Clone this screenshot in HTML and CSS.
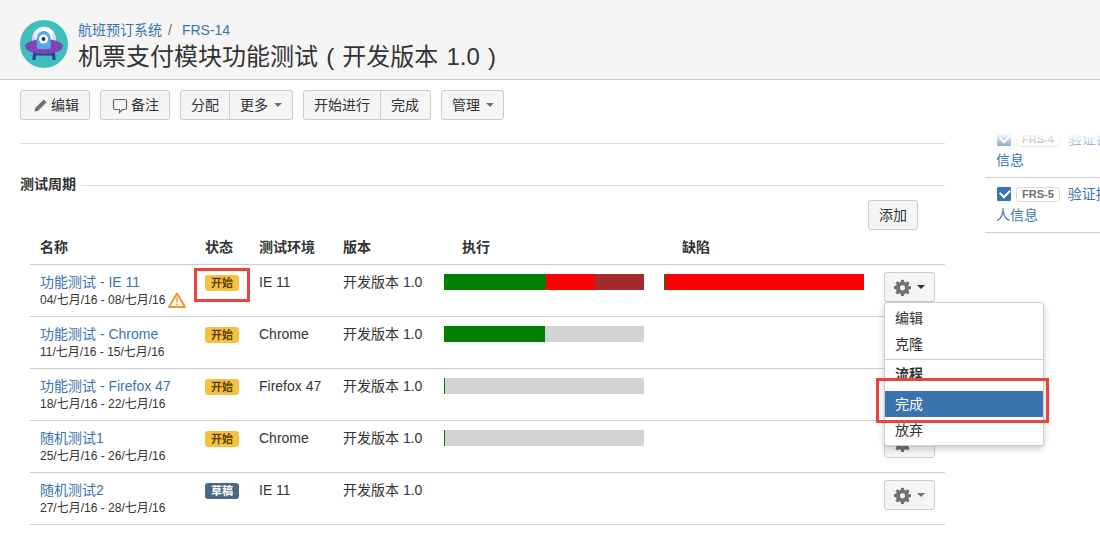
FILE: index.html
```html
<!DOCTYPE html>
<html lang="zh">
<head>
<meta charset="utf-8">
<title>机票支付模块功能测试</title>
<link rel="stylesheet" href="styles.css">
</head>
<body>
<svg class="defs" width="0" height="0" aria-hidden="true">
  <symbol id="gear" viewBox="0 0 24 24">
    <path fill-rule="evenodd" d="M10 1h4l.6 3.2 1.900.8L19.200 3.200l2.800 2.800-1.800 2.700.8 1.900L24 10v4l-3 .6-.8 1.900 1.800 2.700-2.800 2.800-2.700-1.800-1.900.8L14 24h-4l-.6-3-1.900-.8-2.700 1.800L2 19.200l1.800-2.700-.8-1.900L0 14v-4l3-.6.8-1.900L2 6l2.800-2.800 2.700 1.800 1.900-.8zM12 8.800a3.600 3.600 0 1 0 0 7.200 3.600 3.600 0 0 0 0-7.200z"/>
  </symbol>
</svg>

<header class="page-head">
  <svg class="logo" viewBox="0 0 48 48" aria-hidden="true">
    <circle cx="24" cy="24" r="24" fill="#3fbfbb"/>
    <path d="M12.300 30V18.500a11.700 11.700 0 0 1 23.400 0V30z" fill="#fff"/>
    <path d="M12.300 30V18.500a11.700 11.700 0 0 1 3-7.800V30z" fill="#dcd3f2"/>
    <path d="M35.700 30V18.500a11.700 11.700 0 0 0-3-7.800V30z" fill="#dcd3f2"/>
    <path d="M13 33.500h3l-.5 6.500h-3zM32 33.500h3l.5 6.500h-3z" fill="#2f3a94"/>
    <path d="M13 32h22v3.500H13z" fill="#2f3a94"/>
    <ellipse cx="24" cy="26.500" rx="19" ry="7.500" fill="#7d45b5"/>
    <path d="M16.700 18a7 7 0 0 1 14 0v10.500a14 5 0 0 1-14 0z" fill="#55a9e6"/>
    <circle cx="23.500" cy="19" r="4.500" fill="#fff"/>
    <circle cx="23.500" cy="19" r="2" fill="#243a6b"/>
  </svg>
  <div class="head-text">
    <div class="crumbs"><a class="link">航班预订系统</a><span class="sep">/</span><a class="link">FRS-14</a></div>
    <h1 class="title">机票支付模块功能测试 ( 开发版本 1.0 )</h1>
  </div>
</header>

<nav class="toolbar">
  <button class="btn"><svg class="ico" viewBox="0 0 16 16" aria-hidden="true"><path d="M11.500 1.500l3 3L5.500 13.500l-4 1 1-4z" fill="#707070"/></svg>编辑</button>
  <button class="btn"><svg class="ico-bubble" viewBox="0 0 16 16" aria-hidden="true"><path d="M3 1.500h10a1.500 1.500 0 0 1 1.500 1.500v7a1.500 1.500 0 0 1-1.500 1.500h-2.500L7.500 14.500v-3H3A1.500 1.500 0 0 1 1.500 10V3A1.500 1.500 0 0 1 3 1.500z" fill="none" stroke="#666" stroke-width="1.200"/></svg>备注</button>
  <div class="group"><button class="btn">分配</button><button class="btn">更多<span class="caret"></span></button></div>
  <div class="group"><button class="btn">开始进行</button><button class="btn btn-wide">完成</button></div>
  <button class="btn btn-tight">管理<span class="caret"></span></button>
</nav>

<div class="content">
  <main class="main">
    <hr class="top-rule">
    <div class="section-head"><h2 class="section-title">测试周期</h2><span class="section-line"></span></div>
    <div class="add-row"><button class="btn btn-add">添加</button></div>
    <table class="cycles">
      <thead>
        <tr>
          <th class="c-name">名称</th><th class="c-status">状态</th><th class="c-env">测试环境</th><th class="c-ver">版本</th>
          <th class="c-bar th-bar">执行</th><th class="c-bar th-bar">缺陷</th><th class="c-act"></th>
        </tr>
      </thead>
      <tbody>
        <tr>
          <td><a class="link">功能测试 - IE 11</a><div class="dates">04/七月/16 - 08/七月/16<svg class="warn" viewBox="0 0 18 16" aria-hidden="true"><path d="M9 1.500L17 15H1z" fill="#fff" stroke="#f79232" stroke-width="2" stroke-linejoin="round"/><path d="M8.200 5.500h1.600l-.2 5.200H8.400zM8.200 11.700h1.600v1.600H8.200z" fill="#f79232"/></svg></div></td>
          <td><span class="loz loz-go">开始</span></td><td>IE 11</td><td>开发版本 1.0</td>
          <td class="bar-cell"><div class="bar"><i class="seg green" style="width:51%"></i><i class="seg red" style="width:24.500%"></i><i class="seg brown" style="width:24.500%"></i></div></td>
          <td class="bar-cell"><div class="bar"><i class="seg green" style="width:1px"></i><i class="seg red" style="width:199px"></i></div></td>
          <td class="act-cell"><button class="btn btn-gear"><svg class="gear"><use href="#gear"/></svg><span class="caret dark"></span></button></td>
        </tr>
        <tr>
          <td><a class="link">功能测试 - Chrome</a><div class="dates">11/七月/16 - 15/七月/16</div></td>
          <td><span class="loz loz-go">开始</span></td><td>Chrome</td><td>开发版本 1.0</td>
          <td class="bar-cell"><div class="bar grey"><i class="seg green" style="width:50.500%"></i></div></td>
          <td></td><td></td>
        </tr>
        <tr>
          <td><a class="link">功能测试 - Firefox 47</a><div class="dates">18/七月/16 - 22/七月/16</div></td>
          <td><span class="loz loz-go">开始</span></td><td>Firefox 47</td><td>开发版本 1.0</td>
          <td class="bar-cell"><div class="bar grey"><i class="seg green" style="width:1px"></i></div></td>
          <td></td><td></td>
        </tr>
        <tr>
          <td><a class="link">随机测试1</a><div class="dates">25/七月/16 - 26/七月/16</div></td>
          <td><span class="loz loz-go">开始</span></td><td>Chrome</td><td>开发版本 1.0</td>
          <td class="bar-cell"><div class="bar grey"><i class="seg green" style="width:1px"></i></div></td>
          <td></td>
          <td class="act-cell"><button class="btn btn-gear"><svg class="gear"><use href="#gear"/></svg><span class="caret"></span></button></td>
        </tr>
        <tr>
          <td><a class="link">随机测试2</a><div class="dates">27/七月/16 - 28/七月/16</div></td>
          <td><span class="loz loz-draft">草稿</span></td><td>IE 11</td><td>开发版本 1.0</td>
          <td></td><td></td>
          <td class="act-cell"><button class="btn btn-gear"><svg class="gear"><use href="#gear"/></svg><span class="caret"></span></button></td>
        </tr>
      </tbody>
    </table>
  </main>

  <aside class="side">
    <div class="side-item first">
      <div class="side-line"><span class="check"></span><span class="key">FRS-4</span><a class="link">验证银行卡</a></div>
      <a class="link">信息</a>
    </div>
    <div class="side-item">
      <div class="side-line"><span class="check"></span><span class="key">FRS-5</span><a class="link">验证持卡</a></div>
      <a class="link">人信息</a>
    </div>
    <div class="side-fade"></div>
  </aside>
</div>

<ul class="menu">
  <li class="menu-item">编辑</li>
  <li class="menu-item">克隆</li>
  <li class="menu-div"></li>
  <li class="menu-item menu-label">流程</li>
  <li class="menu-item active">完成</li>
  <li class="menu-item">放弃</li>
</ul>
<div class="mark mark-status"></div>
<div class="mark mark-done"></div>
</body>
</html>
```
FILE: styles.css
```css
* { box-sizing: border-box; }
html, body { margin: 0; height: 541px; overflow: hidden; }
body {
  position: relative;
  background: #fff;
  color: #333;
  font: 14px/20px "Liberation Sans", "Noto Sans CJK SC", sans-serif;
}
.defs { position: absolute; }
.link { color: #3b73af; text-decoration: none; }

.page-head {
  height: 80px;
  padding: 20px 20px 0;
  display: flex;
  gap: 10px;
  background: #f5f5f5;
  border-bottom: 1px solid #ccc;
}
.logo { width: 48px; height: 48px; flex: none; }
.crumbs { font-size: 14px; line-height: 20px; }
.sep { margin: 0 10px 0 6px; color: #707070; }
.title { margin: 1px 0 0; font-size: 24px; line-height: 32px; font-weight: 400; color: #333; white-space: nowrap; word-spacing: 1.500px; }

.toolbar { display: flex; gap: 10px; padding: 10px 20px 0; height: 50px; }
.btn {
  height: 30px;
  padding: 0 10px;
  display: inline-flex;
  align-items: center;
  background: #f5f5f5;
  border: 1px solid #ccc;
  border-radius: 3.010px;
  color: #333;
  font: inherit;
  white-space: nowrap;
}
.ico { width: 15px; height: 15px; margin: 0 3px 0 2px; }
.ico-bubble { width: 16px; height: 16px; margin: 2px 3px 0 1px; }
.group { display: flex; }
.group .btn:first-child { border-radius: 3px 0 0 3px; }
.group .btn:last-child { border-radius: 0 3px 3px 0; border-left: 0; }
.group .btn-wide { padding-right: 11px; }
.btn-tight { padding-right: 9px; }
.caret {
  width: 0;
  height: 0;
  margin-left: 6px;
  border: 4px solid transparent;
  border-top-color: #707070;
  border-bottom: 0;
}
.caret.dark { border-top-color: #333; }

.content { display: flex; height: 411px; overflow: hidden; }
.main { width: 925px; margin-left: 20px; flex: none; }
.top-rule { margin: 13px 0 0; border: 0; border-top: 1px solid #ddd; }
.section-head { display: flex; align-items: center; height: 20px; margin-top: 30px; }
.section-title { margin: 0; padding-right: 5px; font-size: 14px; font-weight: 700; line-height: 20px; color: #333; }
.section-line { flex: 1; height: 1px; margin-top: 2px; background: #ddd; }
.add-row { display: flex; justify-content: flex-end; padding-right: 27px; margin-top: 6px; }
.btn-add { padding: 0 10px; }

.cycles { margin-left: 10px; width: 915px; table-layout: fixed; border-collapse: separate; border-spacing: 0; }
.cycles th {
  height: 35px;
  padding: 0 10px;
  text-align: left;
  font-size: 14px;
  font-weight: 700;
  border-bottom: 1px solid #ccc;
}
.c-name { width: 165px; }
.c-status { width: 54px; }
.c-env { width: 84px; }
.c-ver { width: 101px; }
.c-bar { width: 220px; }
.c-act { width: 71px; }
.cycles th.th-bar { padding-left: 28px; }
.cycles td {
  height: 52px;
  padding: 8px 10px 0;
  vertical-align: top;
  line-height: 18px;
  border-bottom: 1px solid #ccc;
  white-space: nowrap;
}
.cycles td.bar-cell { padding-top: 9px; }
.cycles td.act-cell { padding-top: 7px; }
.dates { display: flex; align-items: center; font-size: 12px; line-height: 16px; height: 17px; }
.warn { width: 18px; height: 16px; margin-left: 3px; flex: none; }
.loz {
  display: inline-block;
  width: 34px;
  height: 16px;
  margin-top: 2px;
  border-radius: 3px;
  text-align: center;
  font-size: 11px;
  font-weight: 700;
  line-height: 16px;
}
.loz-go { background: #f6c142; color: #594300; }
.loz-draft { background: #4a6785; color: #fff; }
.bar { display: flex; width: 200px; height: 16px; }
.bar.grey { background: #d3d3d3; }
.seg { display: block; height: 100%; }
.green { background: #008000; }
.red { background: #f00; }
.brown { background: #a52a2a; }
.btn-gear { width: 51px; justify-content: center; padding: 0; }
.gear { width: 17px; height: 17px; fill: #707070; }

.side { position: relative; flex: 1; margin-left: 40px; overflow: hidden; font-size: 14px; }
.side-item { padding: 7px 0 0 11px; height: 55px; border-bottom: 1px solid #ccc; white-space: nowrap; overflow: hidden; }
.side-item.first { margin-top: -8px; height: 56px; padding-top: 8px; }
.side-line { display: flex; align-items: center; height: 18px; margin-bottom: 2px; }
.side-item > .link { display: block; line-height: 20px; }
.check {
  position: relative;
  flex: none;
  width: 14px;
  height: 14px;
  margin: 0 5px 0 1px;
  background: #3b73af;
  border-radius: 1px;
}
.check::after {
  content: "";
  position: absolute;
  left: 3px;
  top: 2px;
  width: 8px;
  height: 5px;
  border-left: 2px solid #fff;
  border-bottom: 2px solid #fff;
  transform: rotate(-45deg);
}
.key {
  flex: none;
  height: 15px;
  margin-right: 8px;
  padding: 0 5px;
  border: 1px solid #ddd;
  border-radius: 3px;
  color: #707070;
  font-size: 11px;
  font-weight: 700;
  line-height: 13px;
}
.side-fade { position: absolute; left: 0; right: 0; top: 0; height: 18px; background: linear-gradient(#fff 20%, rgba(255,255,255,.3)); }

.menu {
  position: absolute;
  left: 884px;
  top: 302px;
  width: 160px;
  height: 144px;
  margin: 0;
  padding: 2px 0 0;
  list-style: none;
  background: #fff;
  border: 1px solid #ccc;
  border-radius: 3px;
  box-shadow: 0 3px 6px rgba(0,0,0,.2);
}
.menu-item { height: 26px; padding: 0 10px; font-size: 14px; line-height: 26px; color: #333; }
.menu-div { height: 1px; margin: 2px 0 0; background: #ccc; }
.menu-label { height: 31px; line-height: 28px; font-weight: 700; overflow: hidden; }
.active { background: #3b73af; color: #fff; }
.mark { position: absolute; border: 3px solid #e8453c; }
.mark-status { left: 194px; top: 268px; width: 56px; height: 34px; }
.mark-done { left: 876px; top: 378px; width: 173px; height: 45px; }
```
